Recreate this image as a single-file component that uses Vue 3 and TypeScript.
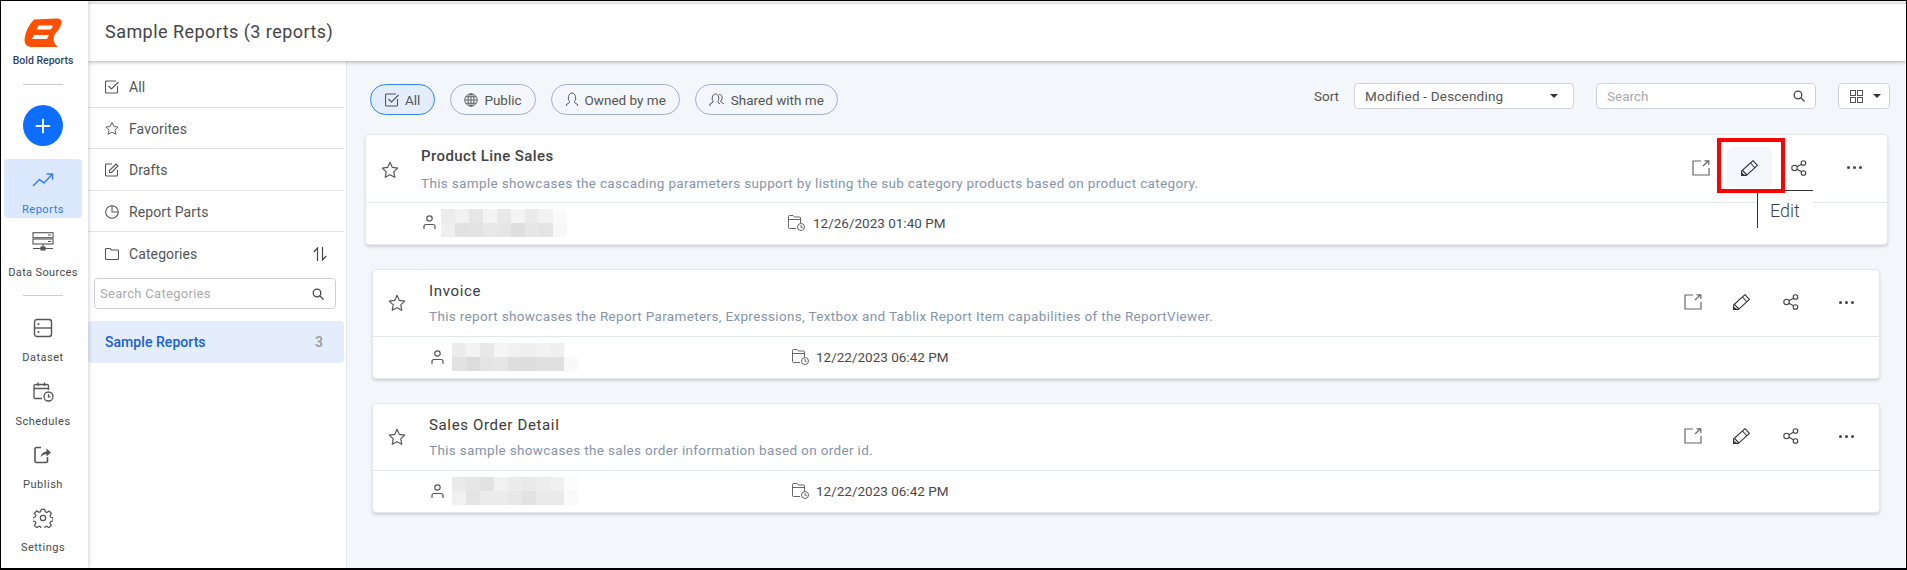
<script setup lang="ts">
interface Report {
  name: string;
  desc: string;
  date: string;
  hot: boolean;
  cells: string[];
}
const r1 = ['#ececec','#f1f1f1','#e6e6e6','#f4f4f4','#e8e8e8','#f4f4f4','#ebebeb','#f2f2f2','#fafafa','#efefef','#e2e2e2','#e3e3e3','#e8e8e8','#e6e6e6','#dfdfdf','#e7e7e7','#e4e4e4','#f8f8f8'];
const r2 = ['#ececec','#f3f3f3','#e8e8e8','#f5f5f5','#f1f1f1','#efefef','#f2f2f2','#efefef','#ffffff','#e2e2e2','#dcdcdc','#e4e4e4','#e6e6e6','#dedede','#dddddd','#e0e0e0','#e0e0e0','#f9f9f9'];
const r3 = ['#eaeaea','#e6e6e6','#e2e2e2','#f1f1f1','#ececec','#e9e9e9','#ededed','#f0f0f0','#fcfcfc','#f1f1f1','#e4e4e4','#ececec','#ececec','#e8e8e8','#e2e2e2','#eaeaea','#eaeaea','#fafafa'];
const reports: Report[] = [
  { name: 'Product Line Sales', desc: 'This sample showcases the cascading parameters support by listing the sub category products based on product category.', date: '12/26/2023 01:40 PM', hot: true, cells: r1 },
  { name: 'Invoice', desc: 'This report showcases the Report Parameters, Expressions, Textbox and Tablix Report Item capabilities of the ReportViewer.', date: '12/22/2023 06:42 PM', hot: false, cells: r2 },
  { name: 'Sales Order Detail', desc: 'This sample showcases the sales order information based on order id.', date: '12/22/2023 06:42 PM', hot: false, cells: r3 },
];
</script>

<template>
  <div class="app">
    <nav class="nav">
      <div class="brand">
        <svg width="38" height="29" viewBox="0 0 38 29"><path fill="#ff4f00" fill-rule="evenodd" d="M10 1.500L33 .5Q38 .5 37.500 5Q36 11 31 16Q29 19 30 24Q31 27 34 29L7 29Q0 28 .5 21Q2 10 10 1.500ZM14.500 7.500H28Q29 7.500 28.500 9L27.800 10.300Q27 11.500 25.500 11.500H12.500ZM10 17H25L23 21H8Z"/></svg>
        <span>Bold Reports</span>
      </div>
      <div class="nav-rule first"></div>
      <div class="plus"><svg width="16" height="16" viewBox="0 0 16 16"><path d="M8 1.500v13M1.500 8h13" stroke="#fff" stroke-width="1.800" stroke-linecap="round"/></svg></div>
      <div class="nav-item active">
        <svg width="22" height="16" viewBox="0 0 22 16" fill="none" stroke="#3b82f6" stroke-width="1.600"><path d="M1 14L7.500 7.500L12 11L20 2.500M14.500 2H20.500V7.500"/></svg>
        <span>Reports</span>
      </div>
      <div class="nav-item ds">
        <svg width="22" height="20" viewBox="0 0 22 20" fill="none" stroke="#555" stroke-width="1.100"><rect x="1" y=".7" width="20" height="5"/><rect x="1" y="7" width="20" height="5"/><path d="M11 12v4M1 16.500h20"/><rect x="9" y="15" width="4" height="3" fill="#555"/><path d="M16 3h3M16 9.500h3"/></svg>
        <span>Data Sources</span>
      </div>
      <div class="nav-rule second"></div>
      <div class="nav-item dataset">
        <svg width="20" height="20" viewBox="0 0 20 20" fill="none" stroke="#555" stroke-width="1.400"><rect x="1.500" y="1.500" width="17" height="17" rx="2.500"/><path d="M1.500 10h17"/><circle cx="5.500" cy="6" r="1" fill="#555" stroke="none"/><circle cx="5.500" cy="14" r="1" fill="#555" stroke="none"/></svg>
        <span>Dataset</span>
      </div>
      <div class="nav-item sched">
        <svg width="21" height="20" viewBox="0 0 21 20" fill="none" stroke="#555" stroke-width="1.300"><path d="M9 16.500H2.500Q1 16.500 1 15V4Q1 2.500 2.500 2.500H14Q15.500 2.500 15.500 4V8M1 6.500H15.500M5 .5V4M11.500 .5V4"/><circle cx="15.500" cy="14.500" r="4.500"/><path d="M15.500 12v2.800h2"/></svg>
        <span>Schedules</span>
      </div>
      <div class="nav-item pub">
        <svg width="18" height="18" viewBox="0 0 18 18" fill="none" stroke="#555" stroke-width="1.600"><path d="M7 1.500H2.500Q1 1.500 1 3V15Q1 16.500 2.500 16.500H12Q13.500 16.500 13.500 15V11"/><path d="M6.500 11.500Q7.500 6 12.500 5.500V2.500L17 6.500L12.500 10.500V8Q9 8 6.500 11.500Z" fill="#555" stroke="none"/></svg>
        <span>Publish</span>
      </div>
      <div class="nav-item gear">
        <svg width="20" height="20" viewBox="0 0 24 24" fill="none" stroke="#555" stroke-width="1.500"><circle cx="12" cy="12" r="3.200"/><path d="M10 1.500h4l.7 3.100 1.900.8 2.700-1.700 2.800 2.800-1.700 2.700.8 1.900 3.100.7v0l-.3 3.800-3 .6-.8 1.900 1.700 2.700-2.800 2.800-2.700-1.700-1.900.8-.7 3h-4l-.7-3-1.900-.8-2.700 1.700-2.800-2.800 1.700-2.700-.8-1.900-3-.6v-4l3-.7.8-1.900-1.700-2.700 2.800-2.800 2.700 1.700 1.900-.8z"/></svg>
        <span>Settings</span>
      </div>
    </nav>

    <div class="main">
      <header class="top">Sample Reports (3 reports)</header>
      <div class="body">
        <aside class="panel">
          <div class="row head-row">
            <svg width="14" height="14" viewBox="0 0 14 14" fill="none" stroke="#555" stroke-width="1.100"><path d="M12.500 6V12Q12.500 13 11.500 13H1.500Q.5 13 .5 12V2Q.5 1 1.500 1H11"/><path d="M3.500 6L6.500 9L13.500 2"/></svg>
            <span>All</span>
          </div>
          <div class="row">
            <svg width="15" height="15" viewBox="0 0 20 20" fill="none" stroke="#555" stroke-width="1.300" stroke-linejoin="round"><path d="M10 1.500l2.600 5.600 6 .8-4.400 4.200 1.100 6L10 15.200l-5.300 2.900 1.100-6L1.400 7.900l6-.8z"/></svg>
            <span>Favorites</span>
          </div>
          <div class="row tall">
            <svg width="14" height="14" viewBox="0 0 14 14" fill="none" stroke="#555" stroke-width="1.100"><path d="M12.500 7V12Q12.500 13 11.500 13H1.500Q.5 13 .5 12V2Q.5 1 1.500 1H7"/><path d="M4.500 9.500V7.500L11 1L13 3L6.500 9.500Z"/></svg>
            <span>Drafts</span>
          </div>
          <div class="row">
            <svg width="14" height="14" viewBox="0 0 14 14" fill="none" stroke="#555" stroke-width="1.100"><circle cx="7" cy="7" r="6.300"/><path d="M7 .7V7H13.300"/></svg>
            <span>Report Parts</span>
          </div>
          <div class="row cat-row">
            <svg width="14" height="12" viewBox="0 0 14 12" fill="none" stroke="#555" stroke-width="1.100"><path d="M.5 10.500V1.500Q.5 .5 1.500 .5H5L6.500 2H12.500Q13.500 2 13.500 3V10.500Q13.500 11.500 12.500 11.500H1.500Q.5 11.500 .5 10.500Z"/></svg>
            <span>Categories</span>
            <svg class="swap" width="14" height="14" viewBox="0 0 14 14" fill="none" stroke="#444" stroke-width="1.200"><path d="M4.500 14V1L.8 5M9.500 0V13L13.200 9"/></svg>
          </div>
          <div class="cat-search">
            <span>Search Categories</span>
            <svg width="12" height="12" viewBox="0 0 12 12" fill="none" stroke="#444" stroke-width="1.300"><circle cx="5" cy="5" r="3.800"/><path d="M8 8l3.500 3.500"/></svg>
          </div>
          <div class="selected"><span>Sample Reports</span><b>3</b></div>
        </aside>

        <section class="content">
          <div class="bar">
            <div class="pill on">
              <svg width="14" height="14" viewBox="0 0 14 14" fill="none" stroke="#555" stroke-width="1.100"><path d="M12.500 6V12Q12.500 13 11.500 13H1.500Q.5 13 .5 12V2Q.5 1 1.500 1H11"/><path d="M3.500 6L6.500 9L13.500 2"/></svg>
              All
            </div>
            <div class="pill">
              <svg width="14" height="14" viewBox="0 0 14 14" fill="none" stroke="#555" stroke-width=".9"><circle cx="7" cy="7" r="6.200"/><ellipse cx="7" cy="7" rx="3" ry="6.200"/><path d="M7 .8v12.400M.8 7h12.400M1.700 3.800h10.600M1.700 10.200h10.600"/></svg>
              Public
            </div>
            <div class="pill">
              <svg width="14" height="15" viewBox="0 0 14 15" fill="none" stroke="#555" stroke-width="1"><path d="M4.500 9.500C2.500 8 3 1 7 1S11.500 8 9.500 9.500V10.500L12.500 12.500V14M4.500 9.500V10.500L1.500 12.500V14"/></svg>
              Owned by me
            </div>
            <div class="pill">
              <svg width="16" height="14" viewBox="0 0 16 14" fill="none" stroke="#555" stroke-width="1"><path d="M4 8C2.500 6.500 3 1 6.500 1S10.500 6.500 9 8V9.200L11 11M4 8V9.200L1 11V13M10 1.500C12.500 1 13.500 3.500 13 6L11.500 8.500L15 11"/></svg>
              Shared with me
            </div>
            <div class="tools">
              <span class="sort">Sort</span>
              <div class="box select">
                <span>Modified - Descending</span>
                <i class="caret"></i>
              </div>
              <div class="box search">
                <span>Search</span>
                <svg width="12" height="12" viewBox="0 0 12 12" fill="none" stroke="#444" stroke-width="1.300"><circle cx="5" cy="5" r="3.800"/><path d="M8 8l3.500 3.500"/></svg>
              </div>
              <div class="box view">
                <svg width="13" height="13" viewBox="0 0 13 13" fill="none" stroke="#555"><rect x=".5" y=".5" width="5" height="5"/><rect x="7.500" y=".5" width="5" height="5"/><rect x=".5" y="7.500" width="5" height="5"/><rect x="7.500" y="7.500" width="5" height="5"/></svg>
                <i class="caret"></i>
              </div>
            </div>
          </div>

          <article v-for="r in reports" :key="r.name" class="card" :class="{ hot: r.hot }">
            <div class="card-top">
              <svg class="star" width="18" height="18" viewBox="0 0 20 20" fill="none" stroke="#555" stroke-width="1.300" stroke-linejoin="round"><path d="M10 1.500l2.600 5.600 6 .8-4.400 4.200 1.100 6L10 15.200l-5.300 2.900 1.100-6L1.400 7.900l6-.8z"/></svg>
              <div class="text">
                <h3>{{ r.name }}</h3>
                <p>{{ r.desc }}</p>
              </div>
              <div class="actions">
                <div class="act">
                  <svg width="18" height="16" viewBox="0 0 18 16" fill="none" stroke="#666" stroke-width="1.200"><path d="M9 1H1V15H17V8"/><path d="M11 6L16.500 .8M12.500 .8H16.800V5"/></svg>
                </div>
                <div class="act pen" :class="{ lit: r.hot }">
                  <svg width="17" height="16" viewBox="0 0 17 16" fill="none" stroke="#333" stroke-width="1.100" stroke-linejoin="round"><path d="M.6 15.400V11L12 .6L16.400 5.400L5.500 15.400Z"/><path d="M9.500 3L14 8M1.500 10.500L6 15"/><path d="M.6 13.200V15.400H3Z" fill="#333"/></svg>
                </div>
                <div class="act">
                  <svg width="16" height="16" viewBox="0 0 16 16" fill="none" stroke="#444" stroke-width="1.100"><circle cx="3.500" cy="8" r="2.700"/><circle cx="12.500" cy="3" r="2.300"/><circle cx="12.500" cy="13" r="2.300"/><path d="M6 6.700L10.500 4.200M6 9.300L10.500 11.800"/></svg>
                </div>
                <div class="act dots"><i></i><i></i><i></i></div>
              </div>
              <template v-if="r.hot">
                <div class="mark"></div>
                <div class="tip">Edit</div>
              </template>
            </div>
            <div class="card-foot">
              <svg class="who" width="13" height="15" viewBox="0 0 13 15" fill="none" stroke="#555" stroke-width="1.200"><circle cx="6.500" cy="3.500" r="2.700"/><path d="M1 14V11.500Q1 9.500 3 9.500H10Q12 9.500 12 11.500V14"/></svg>
              <div class="blur"><i v-for="(c, i) in r.cells" :key="i" :style="{ background: c }"></i></div>
              <svg class="when" width="18" height="16" viewBox="0 0 18 16" fill="none" stroke="#555" stroke-width=".9"><path d="M8 13.500H1.500Q.5 13.500 .5 12.500V1.500Q.5 .5 1.500 .5H5L6.500 2H11.500Q12.500 2 12.500 3V8M.5 4.500H12.500"/><circle cx="13" cy="12" r="3.500"/><path d="M13 10v2.300h1.700"/></svg>
              <span class="date">{{ r.date }}</span>
            </div>
          </article>
        </section>
      </div>
    </div>
  </div>
</template>

<style>
html, body { margin: 0; background: #fff; overflow: hidden; }
</style>

<style scoped>
.app {
  width: 1907px;
  height: 570px;
  box-sizing: border-box;
  border: 1px solid #000;
  border-bottom-width: 2px;
  display: flex;
  overflow: hidden;
  font-family: Roboto, "Liberation Sans", sans-serif;
  color: #4a4a4a;
  background: #fff;
}
.nav {
  width: 87px;
  box-sizing: border-box;
  padding-right: 3px;
  flex: none;
  background: #fff;
  box-shadow: 1px 0 4px rgba(0, 0, 0, .18);
  position: relative;
  z-index: 3;
  display: flex;
  flex-direction: column;
  align-items: center;
}
.brand {
  display: flex;
  flex-direction: column;
  align-items: center;
  margin-top: 17px;
  gap: 7px;
}
.brand span { font-size: 10.500px; font-weight: 500; color: #2f4468; line-height: 13px; }
.nav-rule { width: 40px; height: 1px; background: #c9ccd1; flex: none; }
.nav-rule.first { margin-top: 17px; }
.nav-rule.second { margin-top: 16px; }
.plus {
  width: 40px;
  height: 41px;
  border-radius: 50%;
  background: #0d6efd;
  margin-top: 20px;
  display: flex;
  align-items: center;
  justify-content: center;
}
.nav-item {
  width: 78px;
  display: flex;
  flex-direction: column;
  align-items: center;
  font-size: 11px;
  letter-spacing: .5px;
  color: #4a4a4a;
  line-height: 13px;
}
.nav-item.active {
  height: 59px;
  background: #dbe8fd;
  border-radius: 4px;
  margin-top: 13px;
  color: #2b7cf3;
  padding-top: 13px;
  box-sizing: border-box;
  gap: 15px;
}
.nav-item.ds { margin-top: 14px; gap: 14px; letter-spacing: .35px; }
.nav-item.dataset { margin-top: 22px; gap: 13px; }
.nav-item.sched { margin-top: 18px; gap: 13px; }
.nav-item.pub { margin-top: 18px; gap: 14px; }
.nav-item.gear { margin-top: 17px; gap: 13px; }

.main {
  flex: 1;
  min-width: 0;
  display: flex;
  flex-direction: column;
  padding-top: 3px;
  background: #efefef;
}
.top {
  height: 57px;
  flex: none;
  box-sizing: border-box;
  background: #fff;
  box-shadow: 0 1px 4px rgba(0, 0, 0, .3);
  position: relative;
  z-index: 2;
  padding: 0 0 2px 17px;
  display: flex;
  align-items: center;
  font-size: 18px;
  letter-spacing: .45px;
  color: #454545;
}
.body { flex: 1; display: flex; min-height: 0; }
.panel {
  width: 258px;
  flex: none;
  background: #fff;
  border-right: 1px solid #e3e7ec;
  font-size: 14px;
  letter-spacing: .1px;
}
.row {
  width: 256px;
  height: 41px;
  box-sizing: border-box;
  padding: 1px 0 0 17px;
  border-bottom: 1px solid #e4e4e4;
  display: flex;
  align-items: center;
  gap: 10px;
  color: #555;
}
.row.tall { height: 42px; }
.head-row { height: 47px; padding-top: 6px; }
.row svg { width: 14px; flex: none; }
.cat-row { border-bottom: 0; height: 42px; position: relative; }
.swap { margin-left: auto; margin-right: 17px; }
.cat-search {
  margin: 4px 0 0 6px;
  width: 242px;
  height: 31px;
  box-sizing: border-box;
  border: 1px solid #cdd0d5;
  border-radius: 4px;
  padding: 0 11px 0 5px;
  display: flex;
  align-items: center;
  justify-content: space-between;
  font-size: 13px;
  letter-spacing: .3px;
  color: #ababab;
}
.selected {
  width: 256px;
  height: 42px;
  margin-top: 12px;
  box-sizing: border-box;
  background: #e3edfc;
  border-radius: 4px;
  padding: 0 21px 0 17px;
  display: flex;
  align-items: center;
  justify-content: space-between;
  color: #1a5fd9;
  font-weight: 500;
  letter-spacing: .05px;
}
.selected b { font-weight: 500; color: #9a9a9a; }

.content {
  flex: 1;
  min-width: 0;
  background: #f3f6fa;
  box-sizing: border-box;
  padding: 23px 16px 0 0;
}
.bar {
  display: flex;
  align-items: flex-start;
  gap: 15px;
  padding-left: 23px;
  height: 31px;
}
.pill {
  height: 31px;
  box-sizing: border-box;
  border: 1px solid #9fb0c8;
  border-radius: 16px;
  padding: 0 13px;
  display: flex;
  align-items: center;
  gap: 6px;
  font-size: 13.500px;
  color: #555;
}
.pill.on { border-color: #2f80f7; background: #e3edfc; padding: 0 14px; }
.tools {
  margin-left: auto;
  margin-top: -1px;
  display: flex;
  align-items: center;
  gap: 22px;
  font-size: 13.500px;
}
.sort { margin-right: -7px; color: #555; }
.box {
  height: 26px;
  box-sizing: border-box;
  border: 1px solid #cfd3d9;
  border-radius: 4px;
  background: #fff;
  display: flex;
  align-items: center;
  justify-content: space-between;
}
.select { width: 220px; padding: 0 15px 0 10px; color: #555; letter-spacing: .2px; }
.search { width: 220px; padding: 0 10px; color: #ababab; }
.view { width: 52px; padding: 0 8px 0 11px; }
.caret {
  width: 0;
  height: 0;
  border-left: 4px solid transparent;
  border-right: 4px solid transparent;
  border-top: 4px solid #333;
}

.card {
  margin: 24px 10px 0 25px;
  height: 110px;
  box-sizing: border-box;
  background: #fff;
  border: 1px solid #e4e8ec;
  border-radius: 4px;
  box-shadow: 0 2px 3px rgba(0, 0, 0, .14);
  display: flex;
  flex-direction: column;
}
.card.hot { margin: 19px 2px 0 18px; height: 111px; }
.card-top {
  height: 66px;
  flex: none;
  display: flex;
  align-items: center;
  position: relative;
  border-bottom: 1px solid #e2e7ee;
}
.hot .card-top { height: 67px; }
.star { margin-left: 15px; flex: none; }
.hot .star { margin-top: 2px; }
.text { margin-left: 23px; flex: 1; min-width: 0; }
.hot .text { margin-left: 22px; }
h3 {
  margin: 0;
  font-size: 15px;
  font-weight: 400;
  letter-spacing: .65px;
  line-height: 18px;
  color: #3a3a3a;
}
.hot h3 { font-weight: 500; letter-spacing: .4px; color: #444; }
p {
  margin: 8px 0 0;
  font-size: 13.500px;
  letter-spacing: .34px;
  line-height: 16px;
  color: #8595ab;
}
.hot p { margin-top: 10px; }
.actions { display: flex; align-items: center; padding: 0 8px 2px 0; }
.act {
  width: 49px;
  height: 41px;
  display: flex;
  align-items: center;
  justify-content: center;
  border-radius: 6px;
}
.act.lit { background: #f3f6fa; width: 45px; margin: 0 2px; }
.dots { margin-left: 7px; gap: 3px; }
.dots i { width: 3px; height: 3px; border-radius: 50%; background: #444; }
.mark {
  position: absolute;
  left: 1351px;
  top: 3px;
  width: 68px;
  height: 55px;
  box-sizing: border-box;
  border: 4px solid #f00;
  z-index: 2;
}
.tip {
  position: absolute;
  left: 1391px;
  top: 55px;
  width: 56px;
  height: 38px;
  box-sizing: border-box;
  border-left: 1px solid #333;
  border-top: 1px solid #333;
  background: #fff;
  padding: 10px 0 0 12px;
  font-size: 18px;
  line-height: 20px;
  font-weight: 300;
  color: #444;
  z-index: 1;
}
.card-foot {
  flex: 1;
  display: flex;
  align-items: center;
  padding: 0 0 1px 58px;
  font-size: 13.500px;
  color: #4a4a4a;
}
.hot .card-foot { padding: 0 0 2px 57px; }
.who { flex: none; }
.blur {
  margin-left: 8px;
  width: 126px;
  height: 28px;
  display: grid;
  grid-template-columns: repeat(9, 14px);
  grid-auto-rows: 14px;
}
.hot .blur { margin-left: 5px; }
.when { flex: none; margin-left: 214px; }
.hot .when { margin-left: 221px; }
.date { margin-left: 6px; }
.hot .date { margin-left: 7px; }
</style>
